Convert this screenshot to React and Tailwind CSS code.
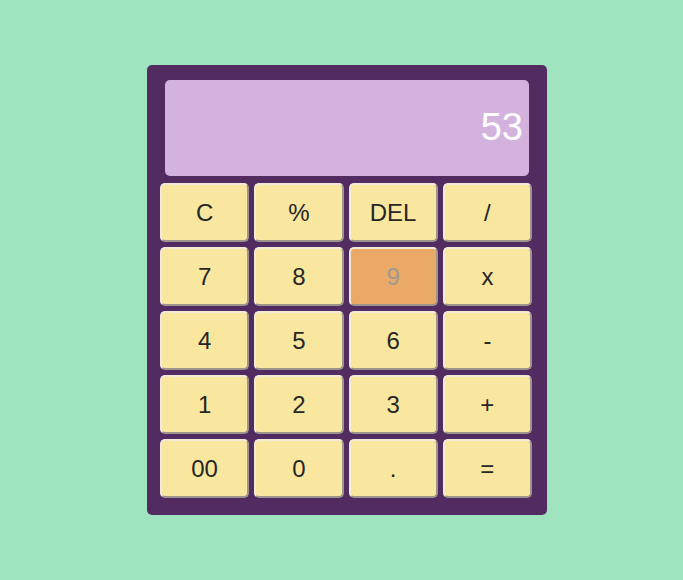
import React from "react";

const KEYS = [
  "C", "%", "DEL", "/",
  "7", "8", "9", "x",
  "4", "5", "6", "-",
  "1", "2", "3", "+",
  "00", "0", ".", "=",
];

export default function App() {
  return (
    <div className="min-h-[580px] w-full bg-[#9fe3bf] flex justify-center pt-[65px] pl-[11px] font-['Liberation_Sans',Arial,sans-serif]">
      <div className="w-[400px] h-[450px] bg-[#522b60] rounded-[5px] pt-[15px] pb-[17px] pl-[13px] pr-[15px]">
        <div className="ml-[5px] mr-[3px] h-[96px] mb-[7px] bg-[#d3b3de] rounded-[5px] flex items-center justify-end pr-[6px] pb-[2px] text-white text-[38px]">
          53
        </div>
        <div className="grid grid-cols-4 gap-x-[5px] gap-y-[5px]">
          {KEYS.map((k) => (
            <button
              key={k}
              className={`h-[59px] rounded-[5px] border-2 border-t-[#f1ead8] border-l-[#f1ead8] border-b-[#9e948e] border-r-[#9e948e] text-[24px] flex items-center justify-center pt-[1px] ${
                k === "9" ? "bg-[#eba967] text-[#9f9a94]" : "bg-[#f9e79f] text-[#262626]"
              }`}
            >
              {k}
            </button>
          ))}
        </div>
      </div>
    </div>
  );
}
